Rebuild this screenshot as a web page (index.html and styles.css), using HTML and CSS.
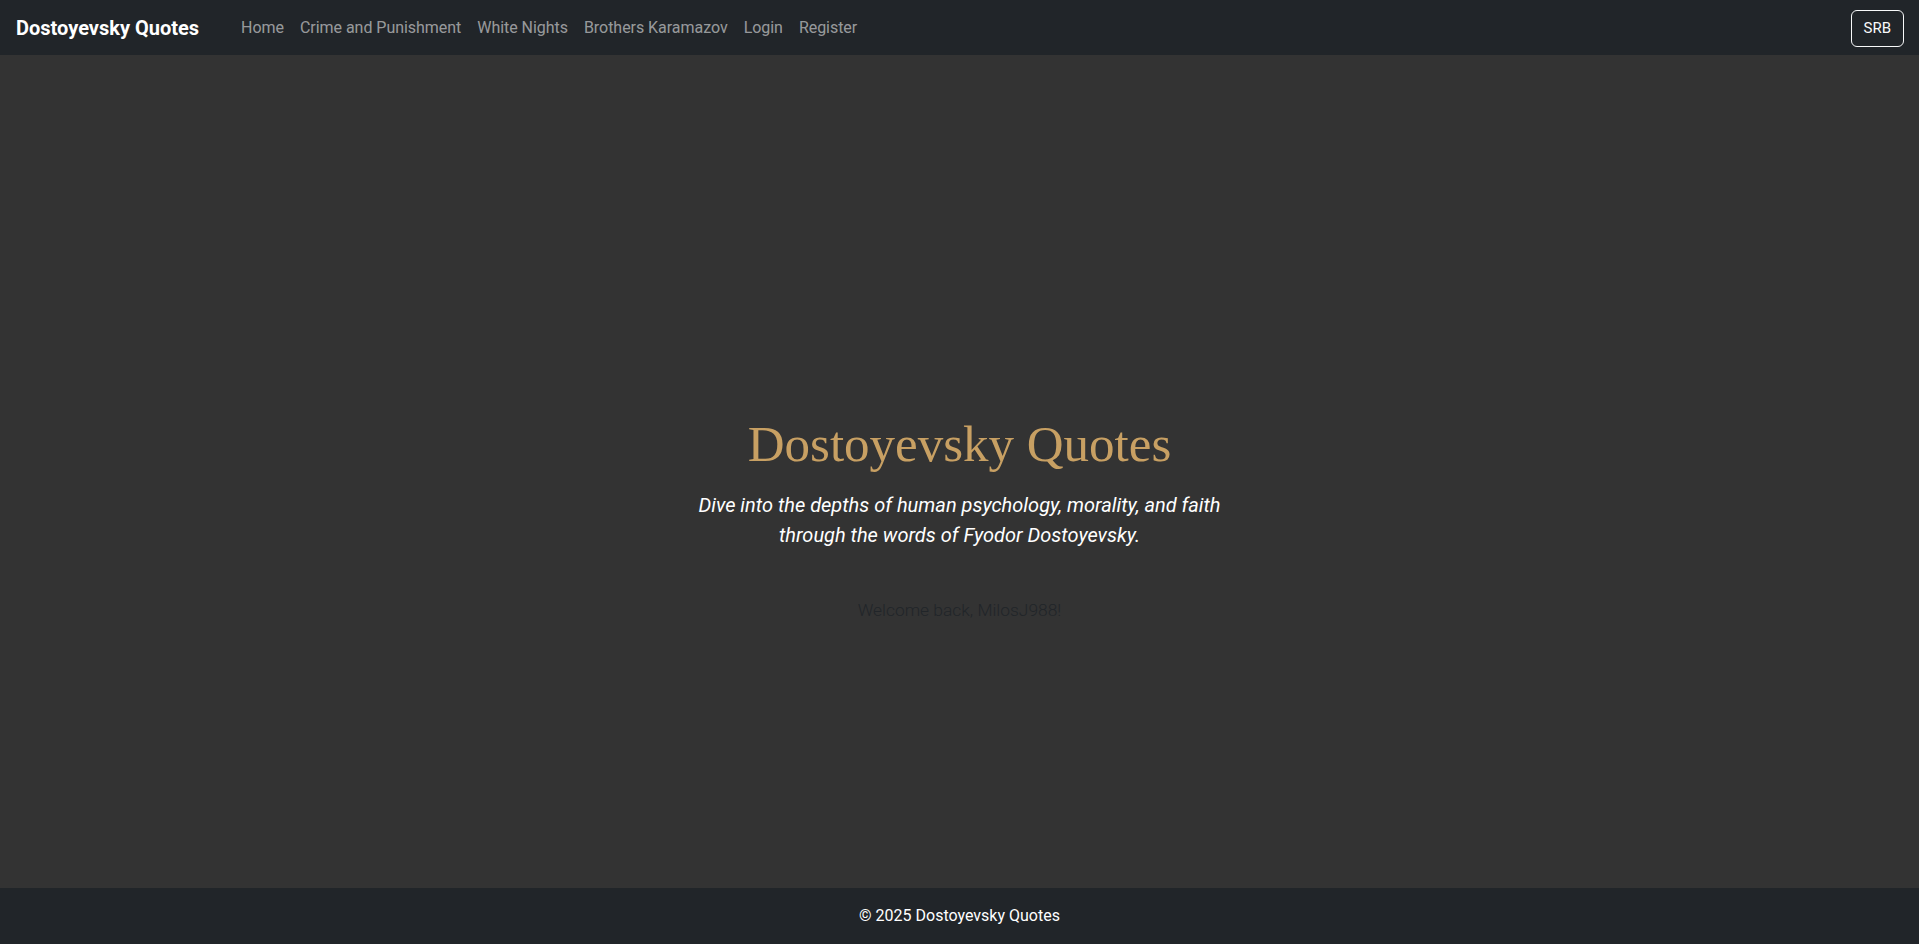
FILE: index.html
```html
<!DOCTYPE html>
<html lang="en">
<head>
<meta charset="utf-8">
<title>Dostoyevsky Quotes</title>
<link rel="stylesheet" href="styles.css">
</head>
<body>
<nav class="navbar">
  <a class="brand" href="#">Dostoyevsky Quotes</a>
  <ul class="nav">
    <li><a class="nav-link" href="#">Home</a></li>
    <li><a class="nav-link" href="#">Crime and Punishment</a></li>
    <li><a class="nav-link" href="#">White Nights</a></li>
    <li><a class="nav-link" href="#">Brothers Karamazov</a></li>
    <li><a class="nav-link" href="#">Login</a></li>
    <li><a class="nav-link" href="#">Register</a></li>
  </ul>
  <button class="lang-btn" type="button">SRB</button>
</nav>
<main class="hero">
  <h1 class="hero-title">Dostoyevsky Quotes</h1>
  <p class="hero-lead">Dive into the depths of human psychology, morality, and faith through the words of Fyodor Dostoyevsky.</p>
  <p class="welcome">Welcome back, MilosJ988!</p>
</main>
<footer class="footer">
  <p>© 2025 Dostoyevsky Quotes</p>
</footer>
</body>
</html>
```
FILE: styles.css
```css
* { box-sizing: border-box; }
html, body { margin: 0; padding: 0; }
body {
  min-height: 100vh;
  display: flex;
  flex-direction: column;
  background: #333333;
  color: #ffffff;
  font-family: Roboto, "Liberation Sans", sans-serif;
  font-size: 16px;
  line-height: 1.5;
}
.navbar {
  height: 55px;
  background: #212529;
  display: flex;
  align-items: center;
  padding: 0 15px 0 16px;
}
.brand {
  color: #ffffff;
  font-size: 20px;
  font-weight: 700;
  text-decoration: none;
  line-height: 30px;
  margin-right: 34px;
}
.nav {
  list-style: none;
  display: flex;
  margin: 0;
  padding: 0;
  flex: 1;
}
.nav-link {
  display: block;
  padding: 8px;
  color: rgba(255, 255, 255, 0.55);
  text-decoration: none;
  font-size: 16px;
  line-height: 24px;
  letter-spacing: -0.04px;
}
.lang-btn {
  height: 37px;
  padding: 0 12px;
  background: transparent;
  border: 1px solid #f8f9fa;
  border-radius: 6px;
  color: #f8f9fa;
  font-family: Roboto, "Liberation Sans", sans-serif;
  font-size: 15px;
  line-height: 24px;
  margin-top: 1px;
}
.hero {
  flex: 1;
  display: flex;
  flex-direction: column;
  align-items: center;
  padding-top: 359px;
  text-align: center;
}
.hero-title {
  margin: 0 0 15px;
  font-family: "Liberation Serif", "DejaVu Serif", serif;
  font-weight: 400;
  font-size: 51px;
  line-height: 1.2;
  color: #c8a063;
}
.hero-lead {
  margin: 0;
  max-width: 560px;
  font-size: 20px;
  font-style: italic;
  line-height: 30px;
  color: #ffffff;
}
.welcome {
  margin: 47px 0 0;
  font-size: 17.4px;
  font-weight: 300;
  line-height: 27px;
  color: #212529;
}
.footer {
  height: 56px;
  background: #212529;
  display: flex;
  align-items: center;
  justify-content: center;
}
.footer p {
  margin: 0;
  font-size: 16px;
  line-height: 24px;
  color: #ffffff;
}
```
